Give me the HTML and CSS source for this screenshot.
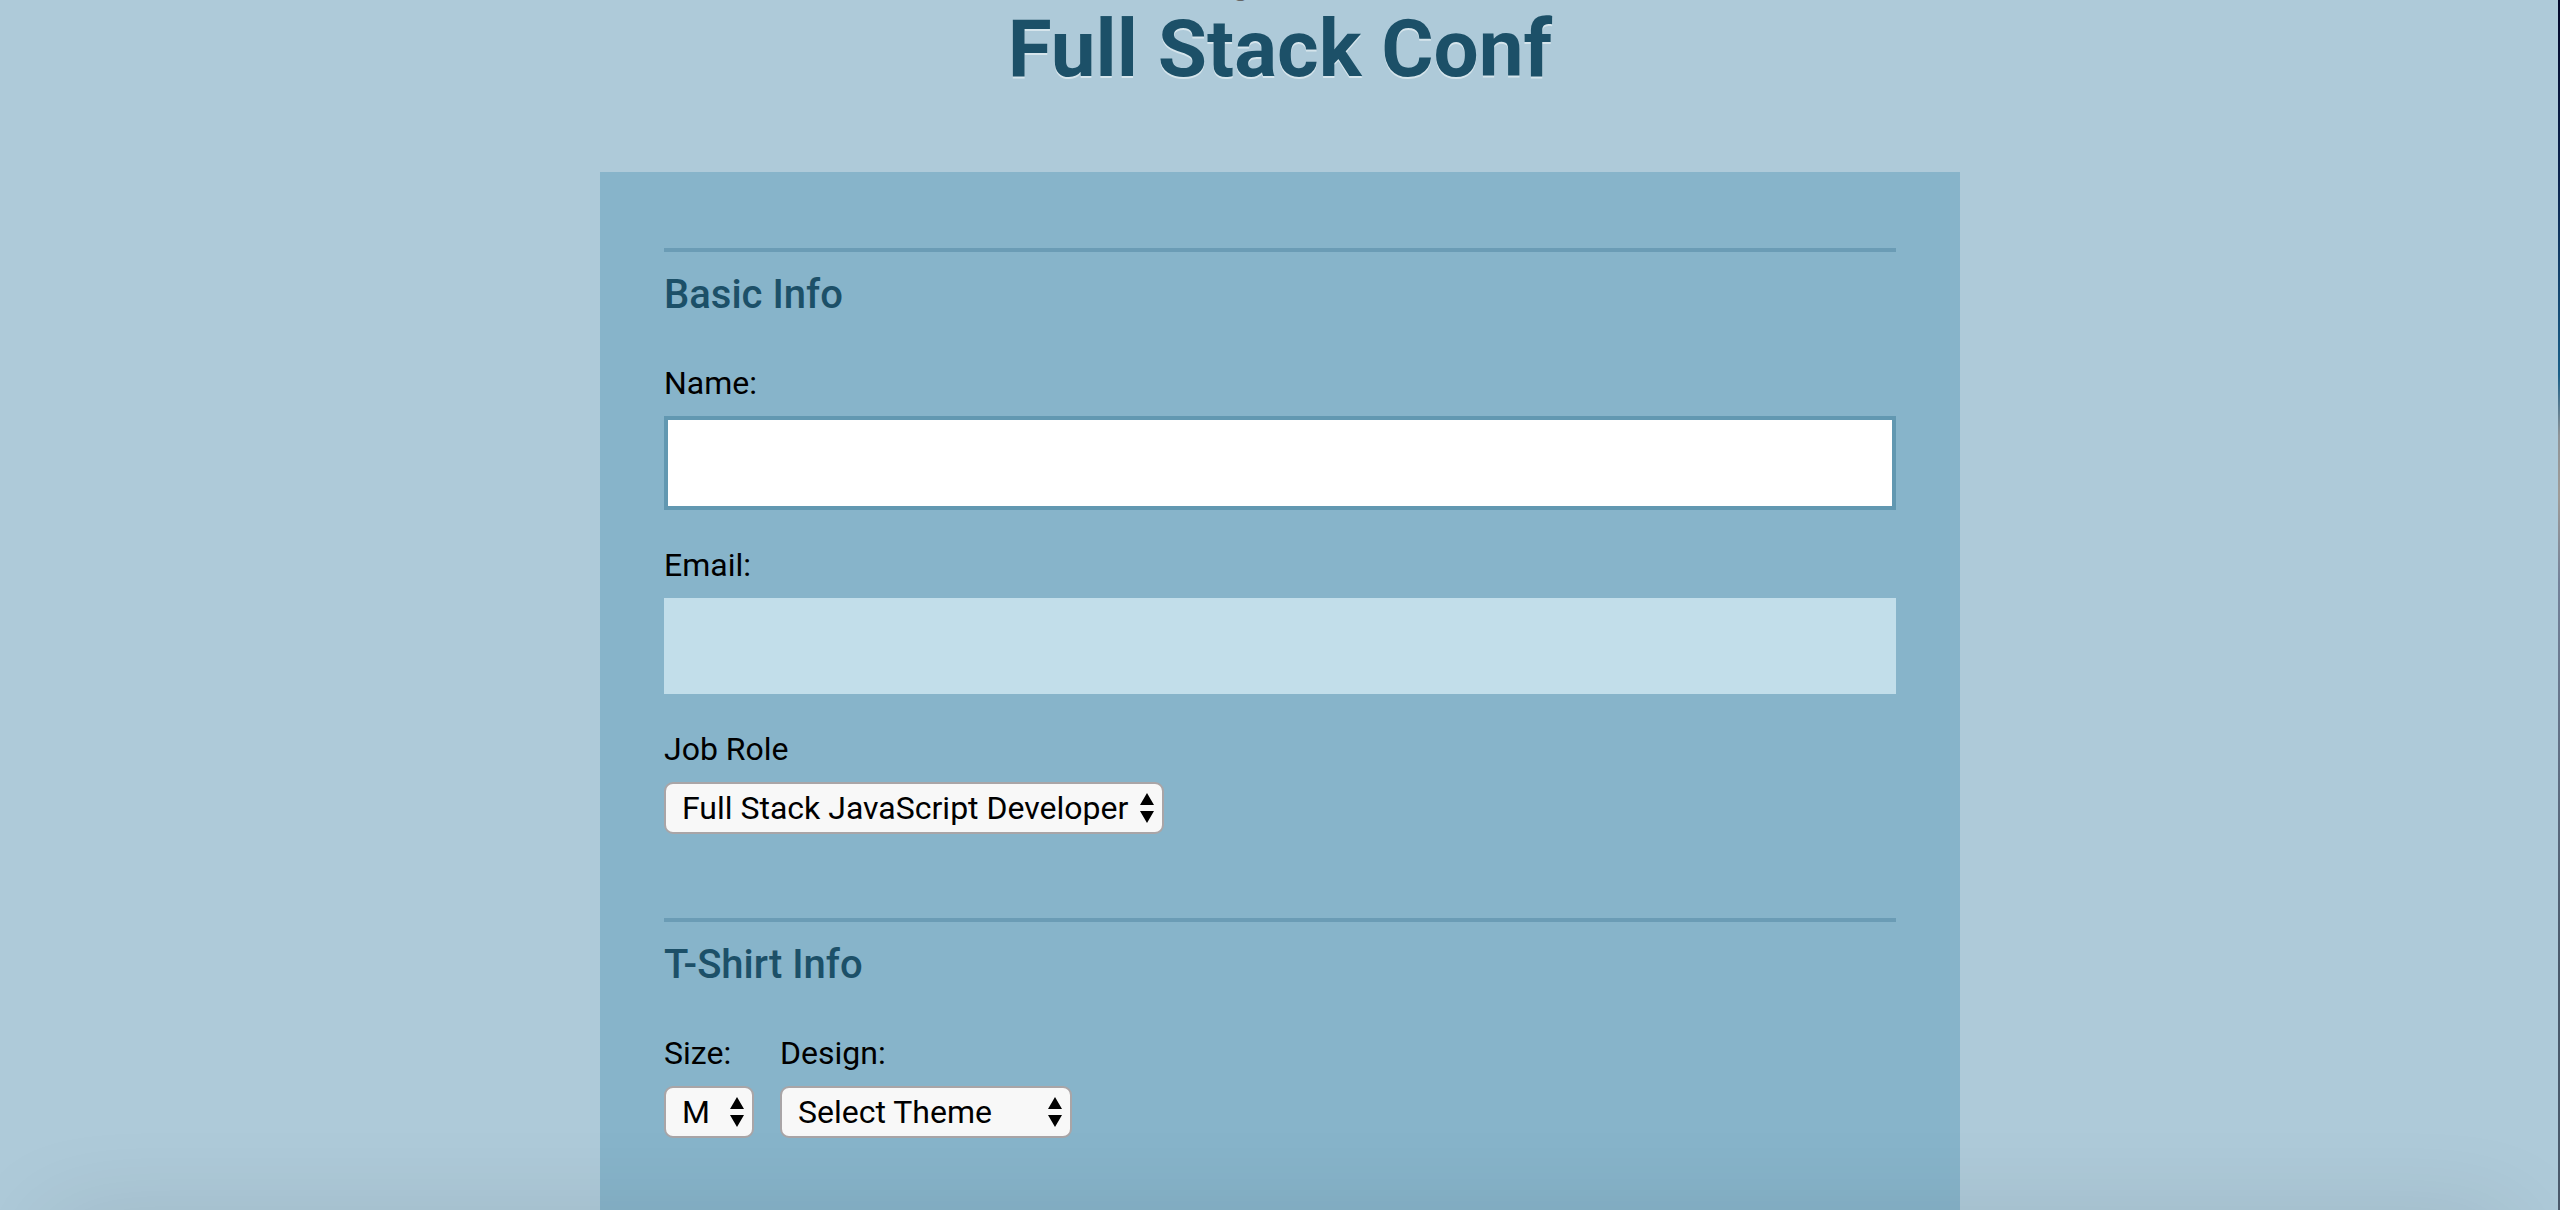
FILE: index.html
```html
<!DOCTYPE html>
<html lang="en">
<head>
  <meta charset="utf-8">
  <title>Full Stack Conf</title>
  <link rel="stylesheet" href="styles.css">
</head>
<body>
  <header class="masthead">
    <p class="kicker">Register for</p>
    <h1 class="title">Full Stack Conf</h1>
  </header>
  <form class="form">
    <fieldset class="group">
      <legend class="legend">Basic Info</legend>
      <div class="field">
        <label for="name">Name:</label>
        <input class="text active" type="text" id="name" name="name">
      </div>
      <div class="field">
        <label for="mail">Email:</label>
        <input class="text" type="email" id="mail" name="mail">
      </div>
      <div class="field">
        <label for="role">Job Role</label>
        <span class="picker">
          <select id="role" name="role"><option>Full Stack JavaScript Developer</option></select>
          <svg class="arrows" viewBox="0 0 14 30" aria-hidden="true"><path d="M7 0l7 12H0zM7 30l7-12H0z"/></svg>
        </span>
      </div>
    </fieldset>
    <fieldset class="group">
      <legend class="legend">T-Shirt Info</legend>
      <div class="row">
        <div class="field">
          <label for="size">Size:</label>
          <span class="picker size">
            <select id="size" name="size"><option>M</option></select>
            <svg class="arrows" viewBox="0 0 14 30" aria-hidden="true"><path d="M7 0l7 12H0zM7 30l7-12H0z"/></svg>
          </span>
        </div>
        <div class="field">
          <label for="design">Design:</label>
          <span class="picker design">
            <select id="design" name="design"><option>Select Theme</option></select>
            <svg class="arrows" viewBox="0 0 14 30" aria-hidden="true"><path d="M7 0l7 12H0zM7 30l7-12H0z"/></svg>
          </span>
        </div>
      </div>
    </fieldset>
  </form>
  <div class="bottom-shade"></div>
  <div class="edge"></div>
</body>
</html>
```
FILE: styles.css
```css
* { box-sizing: border-box; }
html { scrollbar-width: none; }
body {
  margin: 0;
  min-height: 100vh;
  display: flex;
  flex-direction: column;
  background: #aecad9;
  color: #000;
  font: 32px/40px Roboto, sans-serif;
}

/* Header: the page is scrolled so that the kicker is nearly out of view */
.masthead { margin: -37px 0 75px; text-align: center; }
.kicker { margin: 0; font-size: 34px; line-height: 38px; color: #666; }
.title {
  margin: 0;
  font-size: 80px;
  line-height: 96px;
  font-weight: 700;
  color: #1c5068;
  text-shadow: 0 2px 0 #d6e5ec;
}

.form {
  flex: 1;
  width: 100%;
  max-width: 1360px;
  margin: 0 auto;
  padding: 76px 64px 72px;
  background: #87b4ca;
}

.group {
  display: flex;
  flex-direction: column;
  margin: 0 0 84px;
  padding: 19px 0 0;
  border: 0;
  border-top: 4px solid #6b9cb5;
}
.group:last-child { margin-bottom: 0; }
.legend {
  float: left;
  margin: 0 0 44px;
  padding: 0;
  font-size: 40px;
  line-height: 48px;
  font-weight: 500;
  color: #1c5068;
}

.field { display: flex; flex-direction: column; align-items: flex-start; gap: 13px; }
.field + .field { margin-top: 35px; }
.row { display: flex; gap: 26px; }
.row .field + .field { margin-top: 0; }

.text {
  width: 100%;
  height: 96px;
  padding: 0 24px;
  border: 0;
  background: #c2deea;
  font: inherit;
  outline: 0;
}
.text.active,
.text:focus { height: 94px; border: 4px solid #6298b1; background: #fff; }

.picker { position: relative; display: inline-flex; }
.picker.size { width: 90px; }
.picker.design { width: 292px; }
.picker select {
  width: 100%;
  height: 52px;
  padding: 0 33px 0 16px;
  border: 2px solid #a9a5a7;
  border-radius: 9px;
  background: #f8f8f8;
  color: #000;
  font: inherit;
  appearance: none;
}
.arrows {
  position: absolute;
  right: 10px;
  top: 11px;
  width: 14px;
  height: 30px;
  pointer-events: none;
}

/* Soft shade along the lower edge of the window */
.bottom-shade {
  position: fixed;
  left: 50px;
  right: 50px;
  bottom: -70px;
  height: 50px;
  box-shadow: 0 0 100px rgba(0, 0, 0, 0.17);
  pointer-events: none;
}
.edge {
  position: fixed;
  top: 0;
  right: 0;
  bottom: 0;
  width: 2px;
  background: linear-gradient(#04082a, #0c2550 15%, #1a5f88 31%, #8f9498 36%, #a09c98 41%, #74829a 48%, #4a5a6c 80%);
}
```
